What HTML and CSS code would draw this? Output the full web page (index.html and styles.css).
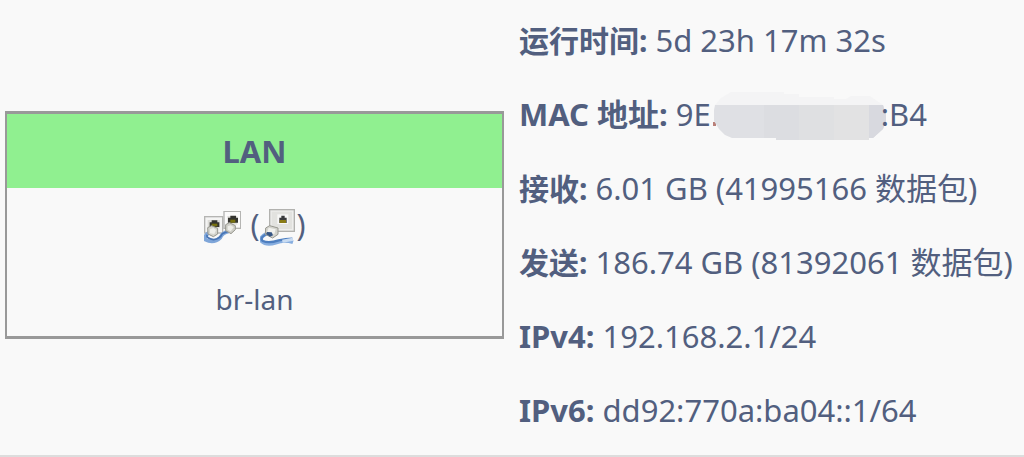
FILE: index.html
```html
<!DOCTYPE html>
<html lang="zh-CN">
<head>
<meta charset="utf-8">
<meta name="viewport" content="width=device-width, initial-scale=1">
<title>LAN</title>
<link rel="stylesheet" href="styles.css">
</head>
<body>
<main class="interface">
  <section class="ifacebox">
    <h2 class="ifacebox-head">LAN</h2>
    <div class="ifacebox-devices">
      <svg class="device-bridge" viewBox="36 33 111 99" role="img" aria-label="网桥">
        <rect x="96" y="34" width="50" height="51" fill="#fbfbfb" stroke="#b5b5b3" stroke-width="4"/>
        <path d="M106 48h30v26h-30z" fill="#e1e0dc"/>
        <path d="M108 53h7v-6h17v6h6v15h-30z" fill="#34342f"/>
        <path d="M115 59h15v9h-15z" fill="#77700f"/>
        <rect x="38" y="50" width="54" height="49" fill="#f4f4f3" stroke="#b5b5b3" stroke-width="4"/>
        <path d="M47 60h37v23H47z" fill="#dddcd8"/>
        <path d="M53 67h6v-6h17v6h6v14H53z" fill="#34342f"/>
        <path d="M59 71h17v8H59z" fill="#77700f"/>
        <path d="M51 98Q36 107 40 119Q65 132 85 113Q91 98 110 94" fill="none" stroke="#7fa6d9" stroke-width="11"/>
        <path d="M45 104Q42 115 65 119Q84 117 91 101L112 92" fill="none" stroke="#4875b5" stroke-width="5"/>
        <path d="M47 83l12-6 18 8v17l-13 8-16-8z" fill="#d4d4cd" stroke="#96968e" stroke-width="3"/>
        <path d="M54 88l10-4 8 6-5 12-13-2z" fill="#efefea"/>
        <path d="M101 74l11-6 18 9v12l-13 12-16-9z" fill="#cfcfc9" stroke="#96968e" stroke-width="3"/>
        <path d="M107 79l9-3 9 6-9 12-9-5z" fill="#eeeee9"/>
      </svg>
      (<svg class="device-port" viewBox="210 27 105 111" role="img" aria-label="以太网适配器">
        <rect x="239" y="29" width="74" height="65" fill="#eeeeec" stroke="#b2b2af" stroke-width="4"/>
        <path d="M245 35h61v52h-61z" fill="#e2e2df"/>
        <path d="M262 43h33v29h-33z" fill="#f7f7f6"/>
        <path d="M268 53h6v-6h10v6h6v16h-22z" fill="#393a3d"/>
        <path d="M269 60h19v9h-19z" fill="#8a7c16"/>
        <path d="M230 101Q210 111 213 122Q229 138 257 128Q283 118 309 127" fill="none" stroke="#86addf" stroke-width="11"/>
        <path d="M235 99Q207 112 218 123Q237 131 266 121Q287 116 307 116" fill="none" stroke="#4e7fc0" stroke-width="7"/>
        <path d="M277 124L309 118" fill="none" stroke="#c9dcf2" stroke-width="9"/>
        <path d="M227 84l12-7 25 7v19l-16 11-22-11z" fill="#d3d3cd" stroke="#999991" stroke-width="3"/>
        <path d="M236 83l21 5-4 15-21-8z" fill="#f1f1ed"/>
        <path d="M231 96l14 1 4 9-9 4-12-8z" fill="#365684"/>
      </svg>)
    </div>
    <div class="ifacebox-name">br-lan</div>
  </section>
  <section class="details">
    <p><strong>运行时间:</strong> 5d 23h 17m 32s</p>
    <p><strong class="latin">MAC 地址:</strong> 9E<svg class="masked" viewBox="0 0 174 50" aria-hidden="true">
      <path d="M0 31h3v4H0z" fill="#b97f78"/>
      <path d="M2 14L8 7 18 1H71V3H86V6H121V8H133L138 5H157L170 14z" fill="#f4f4f5"/>
      <path d="M2 14H170L173 24V30L170 38 160 47H154V49H63V47H19L12 44 6 38 1 30V19z" fill="#dfe0e4"/>
      <path d="M51 14H86V49H63V47H51z" fill="#dcdde1"/>
      <path d="M86 14H121V49H86z" fill="#dfe0e2"/>
      <path d="M121 14H156V49H121z" fill="#e2e2e3"/>
      <path d="M156 14H170L173 24V30L170 38 160 47H156z" fill="#d8d9df"/>
    </svg>:B4</p>
    <p><strong>接收:</strong> 6.01 GB (41995166 数据包)</p>
    <p><strong>发送:</strong> 186.74 GB (81392061 数据包)</p>
    <p><strong class="latin">IPv4:</strong> 192.168.2.1/24</p>
    <p><strong class="latin">IPv6:</strong> dd92:770a:ba04::1/64</p>
  </section>
</main>
</body>
</html>
```

FILE: styles.css
```css
* {
  box-sizing: border-box;
}

body {
  margin: 0;
  background: #f9f9f9;
  color: #525f7f;
  font-family: "Noto Sans", "Noto Sans CJK SC", sans-serif;
  font-size: 31px;
  line-height: 74px;
}

.interface {
  display: grid;
  grid-template-columns: minmax(0, 1fr) minmax(0, 1fr);
  align-items: center;
  column-gap: 15px;
  padding: 3px 6px 8px 5px;
  border-bottom: 2px solid #dddddd;
}

.ifacebox {
  border: 2px solid #999999;
  border-width: 3px 2px;
  text-align: center;
}

.ifacebox-head {
  margin: 0;
  background: #90f090;
  font-size: 31px;
  font-weight: 700;
}

.ifacebox-devices {
  height: 74px;
  font-size: 30px;
}

.ifacebox-name {
  font-size: 28px;
}

.device-bridge {
  width: 37px;
  height: 33px;
  margin-right: 2px;
  vertical-align: middle;
}

.device-port {
  width: 35px;
  height: 37px;
  margin: 0 1px;
  vertical-align: middle;
}

.details {
  white-space: nowrap;
}

.details p {
  height: 74px;
  margin: 0;
}

.details strong {
  font-size: 30px;
}

.details .latin {
  font-size: 31px;
}

.masked {
  width: 174px;
  height: 50px;
  margin: 0 -6px 4px 2px;
  vertical-align: middle;
}
```
